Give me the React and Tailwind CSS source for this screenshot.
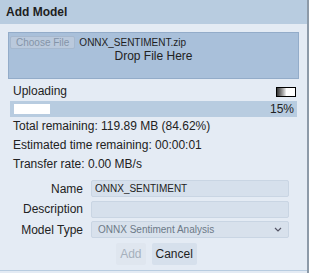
import React from 'react';

const font = { fontFamily: '"Liberation Sans", Arial, sans-serif' };

const Field = ({ label, children }) => (
  <div className="flex items-center h-[17px]">
    <div className="w-[83px] text-right text-[12px] text-[#222] pr-[8px] shrink-0">{label}</div>
    {children}
  </div>
);

export default function App() {
  return (
    <div className="w-[309px] h-[273px] bg-[#e4ebf4] border-r-2 border-[#8d9aa8] overflow-hidden" style={font}>
      <div className="h-[24px] bg-[#b8cce0] flex items-center px-[6px]">
        <span className="font-bold text-[12px] text-[#1e1e1e]">Add Model</span>
      </div>
      <div className="border-b border-[#b8cce0] h-[247px] px-[8px] pt-[8px]">
        {/* drop zone */}
        <div className="h-[47px] bg-[#a9c0da] border border-[#93acc9] pt-[3px] px-[1px]">
          <div className="flex items-center gap-[4px]">
            <span className="bg-[#bac9dc] text-[#8494a8] text-[10px] leading-[9px] px-[5px] border border-[#a6b8ce] rounded-[2px] h-[13px] flex items-center">
              Choose File
            </span>
            <span className="text-[10px] leading-[13px] text-[#1e1e1e]">ONNX_SENTIMENT.zip</span>
          </div>
          <div className="text-center text-[12px] text-[#222] leading-[12px] mt-[1px]">Drop File Here</div>
        </div>

        {/* upload status */}
        <div className="flex items-start justify-between pl-[5px] pr-[3px] mt-[5px] h-[14px]">
          <span className="text-[12px] leading-[14px] text-[#222]">Uploading</span>
          <span className="mt-[3px] w-[20px] h-[10px] border border-black bg-[linear-gradient(to_right,#333,#777_20%,#bbb_38%,#e8e8e8_48%,#fff_52%,#fff)]" />
        </div>
        <div className="mt-[3px] ml-[2px] mr-[2px] h-[16px] bg-[#b8cce0] flex items-center justify-between pl-[4px] pr-[3px]">
          <span className="w-[36px] h-[10px] bg-white" />
          <span className="text-[12px] text-[#222]">15%</span>
        </div>
        <div className="pl-[5px] text-[12px] text-[#222] leading-[19px]">
          <div>Total remaining: 119.89 MB (84.62%)</div>
          <div>Estimated time remaining: 00:00:01</div>
          <div>Transfer rate: 0.00 MB/s</div>
        </div>

        {/* form */}
        <div className="mt-[6px] flex flex-col gap-[3.5px]">
          <Field label="Name">
            <div className="w-[198px] h-[17px] bg-[#d6e0ec] border border-[#c9d5e3] rounded-[2px] text-[10px] text-[#222] px-[3px] flex items-center">
              ONNX_SENTIMENT
            </div>
          </Field>
          <Field label="Description">
            <div className="w-[198px] h-[17px] bg-[#d6e0ec] border border-[#c9d5e3] rounded-[2px]" />
          </Field>
          <Field label="Model Type">
            <div className="w-[198px] h-[17px] bg-[#d8e1ec] border border-[#c9d5e3] rounded-[2px] text-[10px] text-[#6d7a88] pl-[6px] pr-[6px] flex items-center justify-between">
              <span>ONNX Sentiment Analysis</span>
              <svg width="8" height="5" viewBox="0 0 8 5">
                <path d="M1 1 L4 4 L7 1" stroke="#556" strokeWidth="1.2" fill="none" />
              </svg>
            </div>
          </Field>
        </div>
        <div className="flex justify-center gap-[6px] mt-[5px] pl-[6px]">
          <span className="h-[22px] px-[4px] bg-[#dfe6ef] text-[#a6b1bd] text-[12px] flex items-center rounded-[2px]">Add</span>
          <span className="h-[22px] px-[4px] bg-[#d6e0ec] text-[#1e1e1e] text-[12px] flex items-center rounded-[2px]">Cancel</span>
        </div>
      </div>
    </div>
  );
}
